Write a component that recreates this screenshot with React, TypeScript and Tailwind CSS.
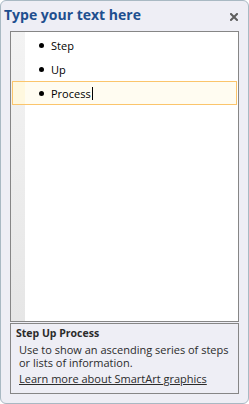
import React from 'react';

const items = ['Step', 'Up', 'Process'];

const App: React.FC = () => {
  return (
    <div className="w-[249px] h-[404px] bg-white font-['Open_Sans',sans-serif]">
      <div className="h-full flex flex-col rounded-[6px] border border-[#a9b9c3] bg-[#eeeef5] px-[9px] pb-[9px]">
        {/* header */}
        <div className="h-[30px] flex items-start justify-between">
          <h1 className="mt-[4px] -ml-[6px] text-[14px] leading-[20px] font-bold text-[#1e4f8f]">
            Type your text here
          </h1>
          <svg className="mt-[12px] mr-[1px] w-[8px] h-[8px]" viewBox="0 0 8 8">
            <path d="M1 1L7 7M7 1L1 7" stroke="#5e5e5e" strokeWidth="2" strokeLinecap="square" />
          </svg>
        </div>

        {/* text pane */}
        <div className="flex-1 flex border border-[#868686] bg-white">
          <div className="w-[14px] bg-gradient-to-b from-[#f3f3f3] to-[#e6e6e6]" />
          <div className="flex-1 pt-[1px] pr-[1px]">
            {items.map((t, i) => {
              const active = i === items.length - 1;
              return (
                <div
                  key={t}
                  className={
                    active
                      ? '-ml-[13px] h-[24px] flex items-center border border-[#fbc56c] bg-[linear-gradient(to_right,#fff8df_0,#fff8df_12px,#fffcf1_12px)]'
                      : '-ml-[13px] h-[24px] flex items-center border border-transparent'
                  }
                >
                  <span className="ml-[26px] w-[5px] h-[5px] rounded-full bg-black" />
                  <span className="ml-[7px] text-[11px] text-black leading-[16px] pt-[1px]">{t}</span>
                  {active && <span className="ml-[1px] w-[1px] h-[13px] bg-black" />}
                </div>
              );
            })}
          </div>
        </div>

        {/* description */}
        <div className="mt-[1px] h-[71px] border border-[#868686] pl-[5px] pt-[1px]">
          <div className="text-[10.5px] leading-[16px] font-bold text-[#2b2b2b]">Step Up Process</div>
          <p className="mt-[2px] pl-[3px] text-[11px] leading-[13px] text-[#2b2b2b]">
            Use to show an ascending series of steps or lists of information.
          </p>
          <a className="block pl-[3px] mt-[3px] text-[11px] leading-[14px] text-[#2b2b2b] underline">
            Learn more about SmartArt graphics
          </a>
        </div>
      </div>
    </div>
  );
};

export default App;
